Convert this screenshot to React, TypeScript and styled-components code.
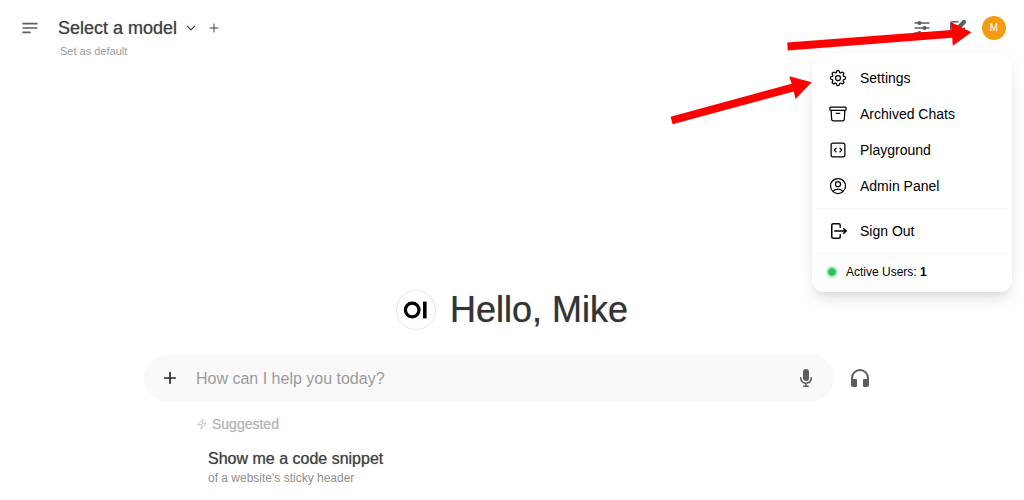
import React from "react";
import styled, { createGlobalStyle } from "styled-components";
import {
  HiMiniMicrophone,
  HiMiniPencilSquare,
  HiOutlineArchiveBox,
  HiOutlineCodeBracketSquare,
  HiOutlineCog8Tooth,
  HiOutlineUserCircle,
} from "react-icons/hi2";

const GlobalStyle = createGlobalStyle`
  *, *::before, *::after { box-sizing: border-box; }
  body {
    margin: 0;
    background: #fff;
    color: #404040;
    font-family: "Liberation Sans", Arial, sans-serif;
    overflow-x: hidden;
  }
  button, input { font: inherit; color: inherit; }
  h1, p { margin: 0; }
`;

const Page = styled.div`
  position: relative;
  min-height: 100vh;
  overflow: hidden;
`;

const Header = styled.header`
  display: flex;
  align-items: flex-start;
  padding: 12px 12px 0 14px;
`;

const IconButton = styled.button<{ $size?: number; $color?: string }>`
  display: flex;
  align-items: center;
  justify-content: center;
  flex: none;
  width: ${(p) => p.$size ?? 32}px;
  height: ${(p) => p.$size ?? 32}px;
  padding: 0;
  border: 0;
  background: none;
  color: ${(p) => p.$color ?? "#5d5d5d"};
  cursor: pointer;
`;

const ModelArea = styled.div`
  flex: 1;
  padding-left: 12px;
`;

const ModelRow = styled.div`
  display: flex;
  align-items: center;
  height: 32px;
  gap: 7px;
`;

const ModelButton = styled.button`
  display: flex;
  align-items: center;
  gap: 8px;
  padding: 0;
  border: 0;
  background: none;
  font-size: 18px;
  line-height: 28px;
  text-shadow: 0 0 1px rgba(64, 64, 64, 0.6);
  cursor: pointer;
`;

const DefaultButton = styled.button`
  display: block;
  padding: 0 0 0 2px;
  border: 0;
  background: none;
  color: #9b9b9b;
  font-size: 11px;
  line-height: 14px;
  cursor: pointer;
`;

const Actions = styled.div`
  position: relative;
  display: flex;
  align-items: center;
  gap: 4px;
`;

const Avatar = styled.button`
  width: 24px;
  height: 24px;
  margin: 0 6px 0 4px;
  padding: 0;
  border: 0;
  border-radius: 50%;
  background: #f39c12;
  color: #fff;
  font-size: 10px;
  line-height: 24px;
  cursor: pointer;
`;

const Menu = styled.nav`
  position: absolute;
  top: 42px;
  right: 0;
  z-index: 2;
  width: 200px;
  padding: 6px 4px;
  border-radius: 12px;
  background: #fff;
  box-shadow: 0 10px 15px -3px rgba(0, 0, 0, 0.1), 0 4px 6px -4px rgba(0, 0, 0, 0.1),
    0 0 20px rgba(0, 0, 0, 0.03);
  color: #000;
`;

const MenuItem = styled.button`
  display: flex;
  align-items: center;
  gap: 12px;
  width: 100%;
  height: 36px;
  padding: 0 12px;
  border: 0;
  background: none;
  font-size: 14px;
  text-align: left;
  cursor: pointer;
`;

const Divider = styled.hr`
  height: 1px;
  margin: 4px 0;
  border: 0;
  background: #f4f4f4;
`;

const ActiveUsers = styled.div`
  display: flex;
  align-items: center;
  gap: 8px;
  height: 28px;
  padding-left: 10px;
  font-size: 12px;
`;

const StatusDot = styled.span`
  width: 12px;
  height: 12px;
  border: 2px solid #b4edc8;
  border-radius: 50%;
  background: #22c55e;
  background-clip: padding-box;
`;

const Main = styled.main`
  width: 100%;
  max-width: 768px;
  margin: 0 auto;
  padding: 232px 16px 0;
`;

const Greeting = styled.div`
  display: flex;
  align-items: center;
  justify-content: center;
  gap: 14px;
  margin-bottom: 24px;
`;

const GreetingText = styled.h1`
  color: #333;
  font-size: 36px;
  font-weight: 400;
  line-height: 40px;
  text-shadow: 0 0 1px rgba(51, 51, 51, 0.6);
`;

const Composer = styled.form`
  display: flex;
  align-items: center;
  gap: 6px;
`;

const InputBar = styled.div`
  display: flex;
  align-items: center;
  flex: 1;
  height: 48px;
  padding: 0 12px 0 10px;
  border-radius: 24px;
  background: #f9f9f9;
`;

const PromptInput = styled.input`
  flex: 1;
  min-width: 0;
  margin-left: 10px;
  padding: 2px 0 0;
  border: 0;
  outline: 0;
  background: none;
  font-size: 16px;
  line-height: 24px;
  &::placeholder { color: #9b9b9b; opacity: 1; }
`;

const Suggestions = styled.section`
  padding: 12px 52px 0;
`;

const SuggestedLabel = styled.p`
  display: flex;
  align-items: center;
  gap: 4px;
  color: #b4b4b4;
  font-size: 14px;
  line-height: 20px;
  text-shadow: 0 0 1px rgba(180, 180, 180, 0.6);
`;

const Suggestion = styled.button`
  display: block;
  margin-top: 13px;
  padding: 0 12px;
  border: 0;
  background: none;
  text-align: left;
  cursor: pointer;
`;

const SuggestionTitle = styled.span`
  display: block;
  font-size: 16px;
  line-height: 24px;
  text-shadow: 0 0 1px rgba(64, 64, 64, 0.6);
`;

const SuggestionNote = styled.span`
  display: block;
  color: #8f8f8f;
  font-size: 12px;
  line-height: 15px;
`;

const Arrows = styled.svg`
  position: absolute;
  top: 0;
  right: 0;
  z-index: 3;
  pointer-events: none;
`;

type StrokeProps = { d: string; size: number; weight: number };

const StrokeIcon = ({ d, size, weight }: StrokeProps) => (
  <svg width={size} height={size} viewBox="0 0 24 24" fill="none" stroke="currentColor"
    strokeWidth={weight} strokeLinecap="round" strokeLinejoin="round" aria-hidden="true">
    <path d={d} />
  </svg>
);

const ControlsIcon = () => (
  <svg width="20" height="20" viewBox="0 0 24 24" fill="currentColor" stroke="currentColor"
    strokeWidth="2" strokeLinecap="round" aria-hidden="true">
    <path d="M3.75 6h16.5M3.75 12h16.5M3.75 18h16.5" />
    <circle cx="9" cy="6" r="1.5" />
    <circle cx="15" cy="12" r="1.5" />
    <circle cx="9" cy="18" r="1.5" />
  </svg>
);

const SignOutIcon = () => (
  <svg width="20" height="20" viewBox="0 0 20 20" fill="currentColor" aria-hidden="true">
    <path fillRule="evenodd" d="M3 4.25A2.25 2.25 0 015.25 2h5.5A2.25 2.25 0 0113 4.25v2a.75.75 0 01-1.5 0v-2a.75.75 0 00-.75-.75h-5.5a.75.75 0 00-.75.75v11.5c0 .414.336.75.75.75h5.5a.75.75 0 00.75-.75v-2a.75.75 0 011.5 0v2A2.25 2.25 0 0110.75 18h-5.5A2.25 2.25 0 013 15.75V4.25z" />
    <path fillRule="evenodd" d="M6 10a.75.75 0 01.75-.75h9.546l-1.048-.943a.75.75 0 111.004-1.114l2.5 2.25a.75.75 0 010 1.114l-2.5 2.25a.75.75 0 11-1.004-1.114l1.048-.943H6.75A.75.75 0 016 10z" />
  </svg>
);

const HeadphonesIcon = () => (
  <svg width="24" height="24" viewBox="0 0 24 24" fill="currentColor" aria-hidden="true">
    <path d="M12 5a7 7 0 0 0-7 7v1h3a1 1 0 0 1 1 1v6a1 1 0 0 1-1 1H5a2 2 0 0 1-2-2v-7a9 9 0 0 1 18 0v7a2 2 0 0 1-2 2h-3a1 1 0 0 1-1-1v-6a1 1 0 0 1 1-1h3v-1a7 7 0 0 0-7-7z" />
  </svg>
);

const Logo = () => (
  <svg width="40" height="40" viewBox="0 0 40 40" aria-hidden="true">
    <circle cx="20" cy="20" r="19.5" fill="#fff" stroke="#e3e3e3" />
    <circle cx="16.2" cy="20" r="6.8" fill="none" stroke="#000" strokeWidth="3.3" />
    <rect x="27" y="11.6" width="3.6" height="16.8" fill="#000" />
  </svg>
);

const menuItems = [
  { label: "Settings", icon: <HiOutlineCog8Tooth size={20} /> },
  { label: "Archived Chats", icon: <HiOutlineArchiveBox size={20} /> },
  { label: "Playground", icon: <HiOutlineCodeBracketSquare size={20} /> },
  { label: "Admin Panel", icon: <HiOutlineUserCircle size={20} /> },
];

export default function App() {
  return (
    <Page>
      <GlobalStyle />
      <Header>
        <IconButton aria-label="Toggle sidebar">
          <StrokeIcon size={20} weight={2} d="M3.75 6.75h16.5M3.75 12h16.5m-16.5 5.25H12" />
        </IconButton>
        <ModelArea>
          <ModelRow>
            <ModelButton>
              Select a model
              <StrokeIcon size={12} weight={2.5} d="m19.5 8.25-7.5 7.5-7.5-7.5" />
            </ModelButton>
            <IconButton $size={20} $color="#404040" aria-label="Add model">
              <StrokeIcon size={12} weight={2} d="M12 4v16M4 12h16" />
            </IconButton>
          </ModelRow>
          <DefaultButton>Set as default</DefaultButton>
        </ModelArea>
        <Actions>
          <IconButton aria-label="Controls"><ControlsIcon /></IconButton>
          <IconButton aria-label="New chat"><HiMiniPencilSquare size={20} /></IconButton>
          <Avatar aria-label="User menu">M</Avatar>
          <Menu aria-label="User menu">
            {menuItems.map((item) => (
              <MenuItem key={item.label}>{item.icon}{item.label}</MenuItem>
            ))}
            <Divider />
            <MenuItem><SignOutIcon />Sign Out</MenuItem>
            <Divider />
            <ActiveUsers>
              <StatusDot />
              <span>Active Users: <b>1</b></span>
            </ActiveUsers>
          </Menu>
        </Actions>
      </Header>
      <Main>
        <Greeting>
          <Logo />
          <GreetingText>Hello, Mike</GreetingText>
        </Greeting>
        <Composer>
          <InputBar>
            <IconButton type="button" $color="#262626" aria-label="More">
              <StrokeIcon size={16} weight={2.5} d="M12 4v16M4 12h16" />
            </IconButton>
            <PromptInput aria-label="Message" placeholder="How can I help you today?" />
            <IconButton type="button" aria-label="Voice input"><HiMiniMicrophone size={20} /></IconButton>
          </InputBar>
          <IconButton type="button" $size={40} aria-label="Call"><HeadphonesIcon /></IconButton>
        </Composer>
        <Suggestions>
          <SuggestedLabel>
            <StrokeIcon size={12} weight={1.5} d="m3.75 13.5 10.5-11.25L12 10.5h8.25L9.75 21.75 12 13.5H3.75Z" />
            Suggested
          </SuggestedLabel>
          <Suggestion>
            <SuggestionTitle>Show me a code snippet</SuggestionTitle>
            <SuggestionNote>of a website's sticky header</SuggestionNote>
          </Suggestion>
        </Suggestions>
      </Main>
      <Arrows width="360" height="130" viewBox="664 0 360 130" fill="#f00" aria-hidden="true">
        <path d="M787.2 42.5 951.4 30 950.8 22 971.4 32.3 952.8 45.8 952.2 37.8 787.8 50.5Z" />
        <path d="M670.6 116.8 791.6 83.8 789.3 76.2 811.6 82.3 795.6 99 793.7 91.4 672.6 124.2Z" />
      </Arrows>
    </Page>
  );
}
